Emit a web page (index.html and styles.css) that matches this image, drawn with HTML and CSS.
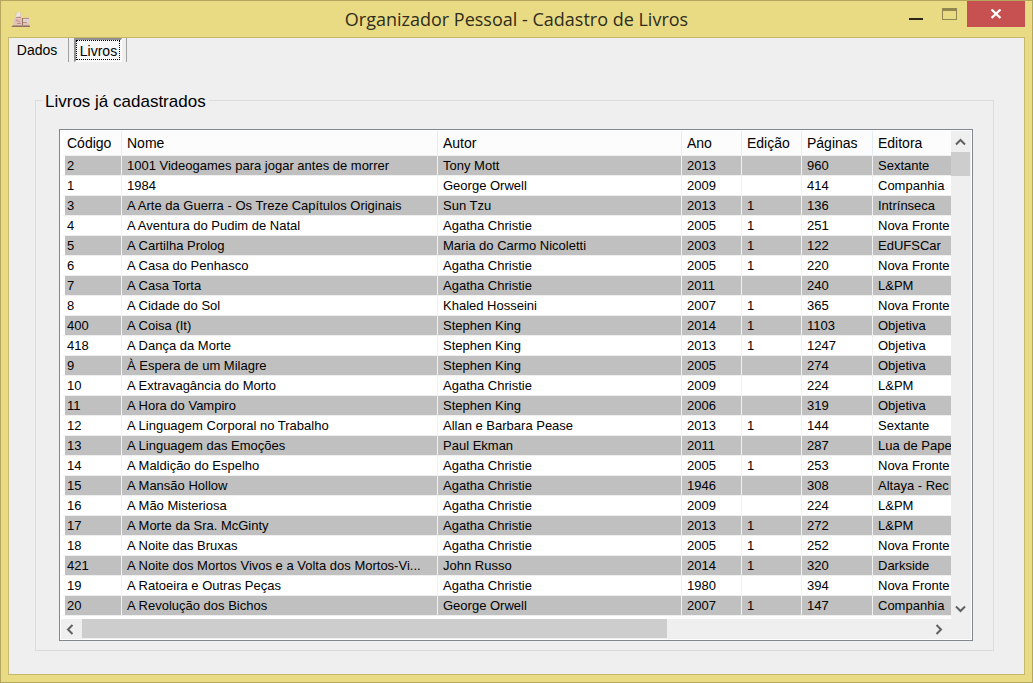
FILE: index.html
```html
<!DOCTYPE html>
<html lang="pt-BR">
<head>
<meta charset="utf-8">
<title>Organizador Pessoal - Cadastro de Livros</title>
<link rel="stylesheet" href="styles.css">
</head>
<body>
<div class="window">
  <header class="titlebar">
    <svg class="app-icon" width="20" height="18" viewBox="0 0 20 18" aria-hidden="true">
      <path d="M0 16L3 13H18L19 16Z" fill="#b89488"/>
      <path d="M4 3L7 1L10 2V7L18 6V14H2L3 8L5 6Z" fill="#dcc6b8"/>
      <path d="M6 2L9 1V5L5 6Z" fill="#ece6e2"/>
      <path d="M4 8H10V12H4Z" fill="#e4bcb6"/>
      <path d="M12 8H18V12H12Z" fill="#dfd3ce"/>
      <path d="M5 6.500H10M5 9L9 11M6 12.500H10M12 7.500H18M12 11.500H16" stroke="#bd8f88" fill="none"/>
      <path d="M11.500 7V14M1 15.500H19" stroke="#94705f" fill="none"/>
    </svg>
    <h1 class="title">Organizador Pessoal - Cadastro de Livros</h1>
    <div class="controls">
      <button class="control minimize" aria-label="Minimizar"><svg width="14" height="2" viewBox="0 0 14 2"><path d="M0 0H14V2H0Z" fill="#2b281a"/></svg></button>
      <button class="control maximize" aria-label="Maximizar" disabled><svg width="15" height="12" viewBox="0 0 15 12"><path d="M0 0H15V12H0ZM1 3V11H14V3Z" fill="#928650" fill-rule="evenodd"/></svg></button>
      <button class="control close" aria-label="Fechar"><svg width="12" height="10" viewBox="0 0 12 10"><path d="M1.500 0.500L10.500 9M10.500 0.500L1.500 9" stroke="#fff" stroke-width="2.300"/></svg></button>
    </div>
  </header>
  <main class="client">
    <nav class="tabs" role="tablist">
      <button class="tab" role="tab" aria-selected="false">Dados</button>
      <button class="tab tab-active" role="tab" aria-selected="true">Livros</button>
    </nav>
    <fieldset class="group">
      <legend>Livros já cadastrados</legend>
      <div class="listview">
        <div class="viewport">
          <table class="books">
            <colgroup><col class="c-code"><col><col class="c-author"><col class="c-year"><col class="c-year"><col class="c-pages"><col class="c-publisher"></colgroup>
            <thead><tr><th>Código</th><th>Nome</th><th>Autor</th><th>Ano</th><th>Edição</th><th>Páginas</th><th>Editora</th></tr></thead>
            <tbody>
<tr><td>2</td><td>1001 Videogames para jogar antes de morrer</td><td>Tony Mott</td><td>2013</td><td></td><td>960</td><td>Sextante</td></tr>
<tr><td>1</td><td>1984</td><td>George Orwell</td><td>2009</td><td></td><td>414</td><td>Companhia</td></tr>
<tr><td>3</td><td>A Arte da Guerra - Os Treze Capítulos Originais</td><td>Sun Tzu</td><td>2013</td><td>1</td><td>136</td><td>Intrínseca</td></tr>
<tr><td>4</td><td>A Aventura do Pudim de Natal</td><td>Agatha Christie</td><td>2005</td><td>1</td><td>251</td><td>Nova Fronte</td></tr>
<tr><td>5</td><td>A Cartilha Prolog</td><td>Maria do Carmo Nicoletti</td><td>2003</td><td>1</td><td>122</td><td>EdUFSCar</td></tr>
<tr><td>6</td><td>A Casa do Penhasco</td><td>Agatha Christie</td><td>2005</td><td>1</td><td>220</td><td>Nova Fronte</td></tr>
<tr><td>7</td><td>A Casa Torta</td><td>Agatha Christie</td><td>2011</td><td></td><td>240</td><td>L&amp;PM</td></tr>
<tr><td>8</td><td>A Cidade do Sol</td><td>Khaled Hosseini</td><td>2007</td><td>1</td><td>365</td><td>Nova Fronte</td></tr>
<tr><td>400</td><td>A Coisa (It)</td><td>Stephen King</td><td>2014</td><td>1</td><td>1103</td><td>Objetiva</td></tr>
<tr><td>418</td><td>A Dança da Morte</td><td>Stephen King</td><td>2013</td><td>1</td><td>1247</td><td>Objetiva</td></tr>
<tr><td>9</td><td>À Espera de um Milagre</td><td>Stephen King</td><td>2005</td><td></td><td>274</td><td>Objetiva</td></tr>
<tr><td>10</td><td>A Extravagância do Morto</td><td>Agatha Christie</td><td>2009</td><td></td><td>224</td><td>L&amp;PM</td></tr>
<tr><td>11</td><td>A Hora do Vampiro</td><td>Stephen King</td><td>2006</td><td></td><td>319</td><td>Objetiva</td></tr>
<tr><td>12</td><td>A Linguagem Corporal no Trabalho</td><td>Allan e Barbara Pease</td><td>2013</td><td>1</td><td>144</td><td>Sextante</td></tr>
<tr><td>13</td><td>A Linguagem das Emoções</td><td>Paul Ekman</td><td>2011</td><td></td><td>287</td><td>Lua de Pape</td></tr>
<tr><td>14</td><td>A Maldição do Espelho</td><td>Agatha Christie</td><td>2005</td><td>1</td><td>253</td><td>Nova Fronte</td></tr>
<tr><td>15</td><td>A Mansão Hollow</td><td>Agatha Christie</td><td>1946</td><td></td><td>308</td><td>Altaya - Rec</td></tr>
<tr><td>16</td><td>A Mão Misteriosa</td><td>Agatha Christie</td><td>2009</td><td></td><td>224</td><td>L&amp;PM</td></tr>
<tr><td>17</td><td>A Morte da Sra. McGinty</td><td>Agatha Christie</td><td>2013</td><td>1</td><td>272</td><td>L&amp;PM</td></tr>
<tr><td>18</td><td>A Noite das Bruxas</td><td>Agatha Christie</td><td>2005</td><td>1</td><td>252</td><td>Nova Fronte</td></tr>
<tr><td>421</td><td>A Noite dos Mortos Vivos e a Volta dos Mortos-Vi...</td><td>John Russo</td><td>2014</td><td>1</td><td>320</td><td>Darkside</td></tr>
<tr><td>19</td><td>A Ratoeira e Outras Peças</td><td>Agatha Christie</td><td>1980</td><td></td><td>394</td><td>Nova Fronte</td></tr>
<tr><td>20</td><td>A Revolução dos Bichos</td><td>George Orwell</td><td>2007</td><td>1</td><td>147</td><td>Companhia</td></tr>
            </tbody>
          </table>
        </div>
        <div class="scroll scroll-v">
          <button class="arrow" aria-label="Rolar para cima"><svg width="11" height="8" viewBox="0 0 11 8"><path d="M1 6.500L5.500 2L10 6.500"/></svg></button>
          <div class="thumb"></div>
          <button class="arrow" aria-label="Rolar para baixo"><svg width="11" height="8" viewBox="0 0 11 8"><path d="M1 1.500L5.500 6L10 1.500"/></svg></button>
        </div>
        <div class="scroll scroll-h">
          <button class="arrow" aria-label="Rolar para a esquerda"><svg width="8" height="11" viewBox="0 0 8 11"><path d="M6.500 1L2 5.500L6.500 10"/></svg></button>
          <div class="track"><div class="thumb"></div></div>
          <button class="arrow" aria-label="Rolar para a direita"><svg width="8" height="11" viewBox="0 0 8 11"><path d="M1.500 1L6 5.500L1.500 10"/></svg></button>
        </div>
      </div>
    </fieldset>
  </main>
</div>
</body>
</html>
```
FILE: styles.css
```css
* { box-sizing: border-box; }
body { margin: 0; font-family: "Liberation Sans", Arial, sans-serif; font-size: 14px; color: #000; }
button { font: inherit; color: inherit; padding: 0; border: 0; background: none; }
svg { display: block; }

.window {
  display: flex; flex-direction: column;
  min-height: 100vh;
  padding: 0 7px 7px;
  background: #e9db83;
  border: 1px solid #b4a65c;
}
.titlebar { display: grid; grid-template-columns: 1fr auto 1fr; height: 36px; }
.app-icon { margin: 10px 0 0 3px; }
.title {
  margin: 0; padding-top: 6px;
  font: 400 18px/24px "Open Sans", "Noto Sans", sans-serif;
  color: #302d1c;
}
.controls { display: flex; justify-content: flex-end; height: 26px; }
.control { display: flex; justify-content: center; }
.minimize { width: 32px; padding-top: 17px; }
.maximize { width: 35px; padding-top: 7px; }
.close { width: 58px; align-items: center; background: #c75050; }

.client {
  flex: 1; display: flex; flex-direction: column;
  padding: 0 30px 23px 26px;
  background: #efefef;
  border: 1px solid #c6b96e;
}
.tabs { display: flex; height: 24px; margin-left: -26px; }
.tab { width: 60px; border-right: 1px solid #a0a0a0; padding-right: 3px; }
.tab-active { position: relative; z-index: 0; width: 58px; padding: 1px 0 0 2px; }
.tab-active::before {
  content: ""; position: absolute; z-index: -1; inset: 0 4px 0 5px;
  background: #f7f7f7;
  border: 1px solid #fff; border-top: 2px solid #909090; border-left: 2px solid #909090;
  outline: 1px dotted #000; outline-offset: -3px;
}

.group {
  flex: 1;
  min-width: 0; margin: 28px 0 0; padding: 19px 20px 9px 23px;
  border: 1px solid #dcdcdc;
}
.group legend { padding: 4px 3px 0; margin-left: -17px; font-size: 17px; line-height: 16px; }

.listview {
  display: grid;
  grid-template-columns: minmax(0, 1fr) 20px;
  grid-template-rows: 1fr 20px;
  padding: 1px;
  background: #efefef;
  border: 1px solid #828790;
  box-shadow: inset 0 0 0 1px #fff;
}
.viewport { overflow: hidden; padding-bottom: 3px; background: #fff; }
.books { width: 100%; table-layout: fixed; border-collapse: separate; border-spacing: 0; }
.c-code { width: 61px; }
.c-author { width: 244px; }
.c-year { width: 60px; }
.c-pages { width: 71px; }
.c-publisher { width: 78px; }
.books th, .books td {
  padding: 0 0 0 5px;
  overflow: hidden; white-space: nowrap; text-align: left; font-weight: 400;
  border-right: 1px solid #f0f0f0; border-bottom: 1px solid #f0f0f0;
}
.books th { height: 25px; background: #fcfcfc; border-right-color: #e3edf6; }
.books td { height: 20px; font-size: 13px; line-height: 19px; }
.books td:last-child, .books th:last-child { border-right: 0; }
.books th:first-child, .books td:first-child { padding-left: 2px; border-left: 4px solid #fff; }
.books tbody tr:nth-child(odd) td { background: #c0c0c0; }

.scroll { display: flex; background: #efefef; }
.scroll-v { flex-direction: column; }
.scroll-v .thumb { height: 24px; margin-right: 1px; }
.scroll-v .arrow:last-child { margin-top: auto; }
.scroll-h { padding-bottom: 1px; }
.track { flex: 1; }
.track .thumb { width: 69%; height: 100%; }
.thumb { background: #cdcdcd; }
.arrow { display: flex; align-items: center; justify-content: center; width: 21px; height: 20px; }
.scroll-h .arrow { padding-right: 3px; }
.scroll-v .arrow { width: 19px; height: 21px; }
.arrow path { fill: none; stroke: #606060; stroke-width: 2; }
```
